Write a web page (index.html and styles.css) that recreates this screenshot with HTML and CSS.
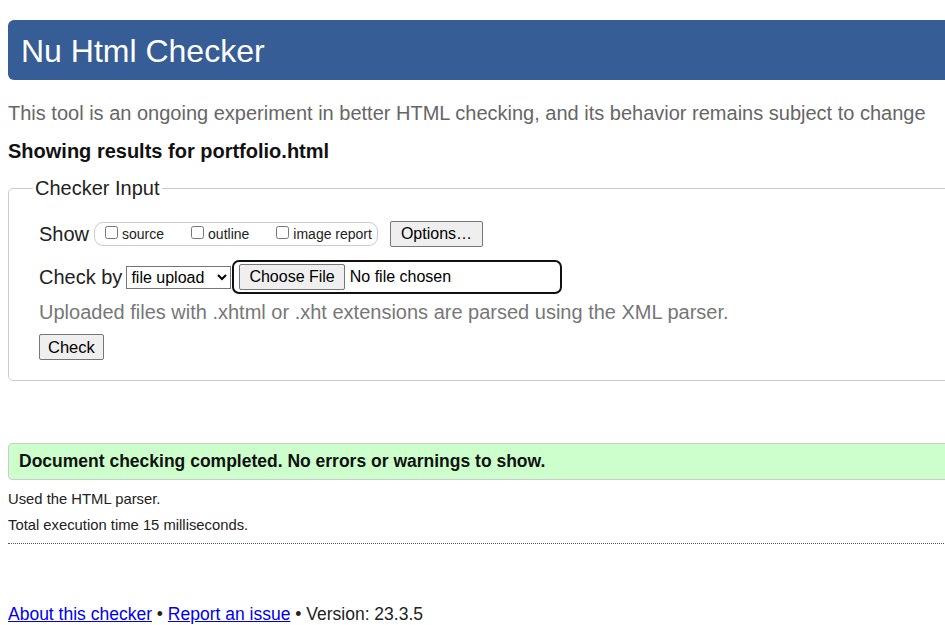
FILE: index.html
```html
<!DOCTYPE html>
<html lang="en">
<head>
<meta charset="utf-8">
<title>Showing results for portfolio.html - Nu Html Checker</title>
<link rel="stylesheet" href="styles.css">
</head>
<body>
<header class="hd"><h1 class="hd-title">Nu Html Checker</h1></header>
<p class="intro">This tool is an ongoing experiment in better HTML checking, and its behavior remains subject to change</p>
<p class="showing">Showing results for portfolio.html</p>
<form class="frm">
<fieldset class="fs">
<legend class="lg">Checker Input</legend>
<div class="row row-show">
<span class="lbl">Show</span>
<span class="opts">
<label class="opt"><input type="checkbox" class="cb"> source</label>
<label class="opt"><input type="checkbox" class="cb"> outline</label>
<label class="opt"><input type="checkbox" class="cb"> image report</label>
</span>
<button type="button" class="btn btn-opt">Options…</button>
</div>
<div class="row row-by">
<span class="lbl">Check by</span>
<select class="sel"><option>file upload</option></select>
<span class="file"><button type="button" class="btn btn-file">Choose File</button><span class="nofile">No file chosen</span></span>
</div>
<p class="note">Uploaded files with .xhtml or .xht extensions are parsed using the XML parser.</p>
<button type="button" class="btn btn-check">Check</button>
</fieldset>
</form>
<p class="success">Document checking completed. No errors or warnings to show.</p>
<p class="meta">Used the HTML parser.</p>
<p class="meta">Total execution time 15 milliseconds.</p>
<hr class="sep">
<p class="foot"><a href="#">About this checker</a> • <a href="#">Report an issue</a> • Version: 23.3.5</p>
</body>
</html>
```
FILE: styles.css
```css
html, body { overflow: hidden; }
body {
  margin: 8px;
  font-family: "Liberation Sans", Arial, sans-serif;
  color: #111;
  background: #fff;
  width: 1000px;
}
.hd {
  margin-top: 12px;
  height: 60px;
  background: #365d95;
  border-radius: 6px;
  display: flex;
  align-items: center;
  padding-left: 13px;
}
.hd-title {
  margin: 0;
  font-weight: normal;
  font-size: 32px;
  color: #fff;
  line-height: 36px;
  position: relative;
  top: 1px;
}
.intro {
  margin: 20px 0 0;
  font-size: 20px;
  line-height: 26px;
  color: #666;
}
.showing {
  margin: 13px 0 0;
  font-size: 20px;
  line-height: 25px;
  font-weight: bold;
  color: #111;
}
.frm { margin: 0; }
.fs {
  margin: 13px 0 0;
  padding: 6px 30px 20px;
  border: 1px solid #ccc;
  border-radius: 5px;
}
.lg {
  font-size: 20px;
  padding: 0 2px;
  margin-left: -6px;
  color: #222;
}
.row {
  display: flex;
  align-items: center;
}
.row-show { margin-top: 15px; }
.lbl {
  font-size: 20px;
  color: #222;
  margin-right: 5px;
}
.opts {
  display: inline-flex;
  align-items: center;
  border: 1px solid #ccc;
  border-radius: 9px;
  height: 22px;
  padding: 0 5px 0 6px;
  gap: 23px;
}
.opt {
  font-size: 14px;
  color: #222;
  display: inline-flex;
  align-items: center;
}
.cb { margin: 0 4px 0 4px; width: 13px; height: 13px; position: relative; top: -2px; }
.btn {
  font-family: "Liberation Sans", Arial, sans-serif;
  font-size: 16px;
  background: #efefef;
  border: 1px solid #767676;
  border-radius: 2px;
  color: #000;
  padding: 1px 7px;
}
.btn-opt { margin-left: 12px; height: 26px; padding: 0 10px; }
.row-by { margin-top: 13px; }
.sel {
  font-family: "Liberation Sans", Arial, sans-serif;
  font-size: 16px;
  height: 23px;
  margin-left: -1px;
  border: 1px solid #767676;
  border-radius: 0;
  background: #fff;
  color: #000;
  width: 105px;
}
.file {
  display: inline-flex;
  align-items: center;
  margin-left: 1px;
  width: 330px;
  height: 34px;
  box-sizing: border-box;
  border: 2px solid #111;
  border-radius: 7px;
  padding-left: 5px;
}
.btn-file { height: 26px; padding: 0 9px; }
.nofile { font-size: 16px; margin-left: 5px; color: #000; }
.note {
  margin: 6px 0 0;
  font-size: 20px;
  line-height: 24px;
  color: #777;
}
.btn-check { margin-top: 10px; height: 26px; padding: 0 8px; font-size: 16.5px; }
.success {
  margin: 62px 0 0;
  height: 37px;
  box-sizing: border-box;
  display: flex;
  align-items: center;
  padding-left: 10px;
  background: #ccffcc;
  border: 1px solid #ccc;
  border-radius: 4px;
  font-size: 17.5px;
  font-weight: bold;
  color: #111;
}
.meta {
  margin: 8px 0 0;
  font-size: 14.8px;
  line-height: 18px;
  color: #222;
}
.success + .meta { margin-top: 10px; }
.sep {
  margin: 9px 0 0;
  border: 0;
  border-top: 1px dotted #555;
  height: 0;
}
.foot {
  margin: 59px 0 0;
  font-size: 17.5px;
  line-height: 22px;
  color: #222;
}
.foot a { color: #0000ee; }
```
